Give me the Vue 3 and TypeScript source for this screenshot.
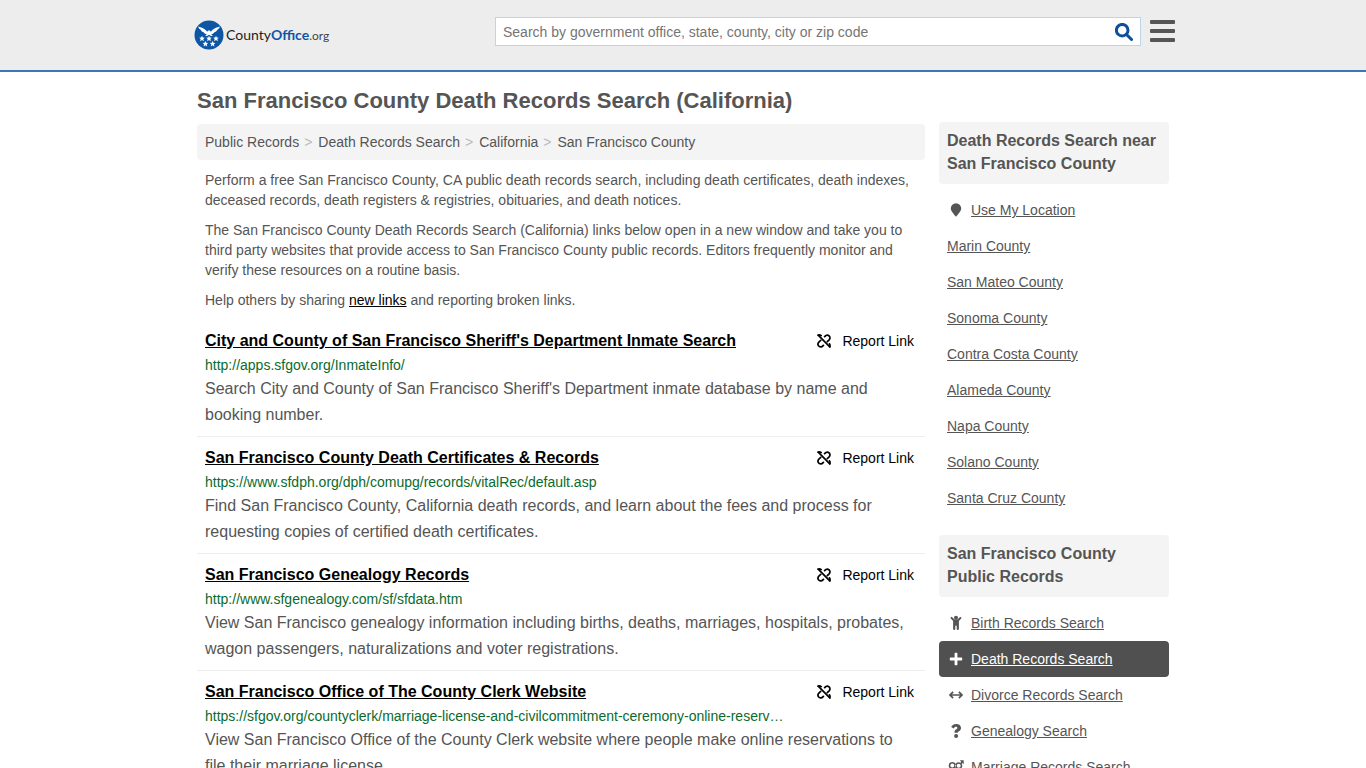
<script setup lang="ts">
interface Resource {
  title: string
  url: string
  text: string
}

interface RecordLink {
  label: string
  path: string
  active?: boolean
}

const crumbs: string[] = ['Public Records', 'Death Records Search', 'California', 'San Francisco County']

const stars: [number, number][] = [
  [8, 18.5],
  [15, 18.5],
  [22, 18.5],
  [11.4, 23.7],
  [18.6, 23.7],
]

const resources: Resource[] = [
  {
    title: "City and County of San Francisco Sheriff's Department Inmate Search",
    url: 'http://apps.sfgov.org/InmateInfo/',
    text: "Search City and County of San Francisco Sheriff's Department inmate database by name and booking number.",
  },
  {
    title: 'San Francisco County Death Certificates & Records',
    url: 'https://www.sfdph.org/dph/comupg/records/vitalRec/default.asp',
    text: 'Find San Francisco County, California death records, and learn about the fees and process for requesting copies of certified death certificates.',
  },
  {
    title: 'San Francisco Genealogy Records',
    url: 'http://www.sfgenealogy.com/sf/sfdata.htm',
    text: 'View San Francisco genealogy information including births, deaths, marriages, hospitals, probates, wagon passengers, naturalizations and voter registrations.',
  },
  {
    title: 'San Francisco Office of The County Clerk Website',
    url: 'https://sfgov.org/countyclerk/marriage-license-and-civilcommitment-ceremony-online-reservations',
    text: 'View San Francisco Office of the County Clerk website where people make online reservations to file their marriage license.',
  },
]

const counties: string[] = [
  'Marin County',
  'San Mateo County',
  'Sonoma County',
  'Contra Costa County',
  'Alameda County',
  'Napa County',
  'Solano County',
  'Santa Cruz County',
]

const records: RecordLink[] = [
  {
    label: 'Birth Records Search',
    path: 'M8 .8a2 2 0 1 1 0 4 2 2 0 0 1 0-4zM2.800 2.200a1 1 0 0 1 1.400 0L6.800 4.800h2.400l2.600-2.600a1 1 0 0 1 1.400 1.400L10.900 6v8a1.100 1.100 0 0 1-2.200 0v-3.300H7.300V14a1.100 1.100 0 0 1-2.200 0V6L2.800 3.600a1 1 0 0 1 0-1.400z',
  },
  {
    label: 'Death Records Search',
    path: 'M7.200 1.800h1.600q.6 0 .6.600v4.200h4.200q.6 0 .6.600v1.600q0 .6-.6.600H9.400v4.200q0 .6-.6.600H7.200q-.6 0-.6-.6V9.400H2.400q-.6 0-.6-.6V7.200q0-.6.6-.6h4.200V2.400q0-.6.6-.6z',
    active: true,
  },
  {
    label: 'Divorce Records Search',
    path: 'M.8 8l3.700-3.700 1.200 1.200L4 7.200h8l-1.700-1.700 1.200-1.200L15.200 8l-3.700 3.700-1.200-1.200L12 8.800H4l1.700 1.700-1.200 1.200z',
  },
  {
    label: 'Genealogy Search',
    path: 'M3.200 4C4.200 2 5.900.9 8.200.9c2.700 0 4.800 1.600 4.800 4 0 3.100-3.200 3.200-3.200 4.500v.3H6.500v-.6c0-2.500 2.900-2.700 2.900-4 0-.8-.6-1.300-1.500-1.300-.9 0-1.600.6-2.200 1.600zM8.100 10.900a2 2 0 1 1 0 4 2 2 0 0 1 0-4z',
  },
  {
    label: 'Marriage Records Search',
    path: 'M4.300 3a3.600 3.600 0 0 1 .8 7.100v1.400h1.500V13H5.100v1.800H3.500V13H2v-1.500h1.500v-1.400A3.600 3.600 0 0 1 4.300 3zm0 1.600a2 2 0 1 0 0 4 2 2 0 0 0 0-4zM11.800 1.300h3.900v3.900l-1.200-1.100-.8.800a3.600 3.600 0 1 1-1.100-1.100l.7-.8zM10.700 4.800a2 2 0 1 0 0 4 2 2 0 0 0 0-4z',
  },
]
</script>

<template>
  <div class="page">
    <header class="site-header">
      <div class="wrap header-row">
        <a class="logo" href="#" aria-label="CountyOffice.org">
          <svg class="emblem" viewBox="0 0 30 30" aria-hidden="true">
            <circle cx="15" cy="15" r="14.500" fill="#0d56a6" />
            <path
              fill="#fff"
              d="M4 6.500c3.500.8 7 2 9.300 5.300.3-.9.900-1.400 1.800-1.400.8 0 1.400.4 1.700 1.300C19 8.500 22.500 7.300 26 6.500c-.6 1.600-1.500 2.700-2.700 3.300-.7 1.400-1.700 2.200-2.900 2.500-.8 1.200-1.900 1.900-3.200 2.100l1.800 1.600h-2L15 14.800 13 16h-2l1.800-1.600c-1.300-.2-2.400-.9-3.200-2.100-1.200-.3-2.200-1.100-2.900-2.500C5.500 9.200 4.600 8.100 4 6.500z"
            />
            <path
              v-for="[x, y] in stars"
              :key="`${x}-${y}`"
              :transform="`translate(${x} ${y})`"
              fill="#fff"
              d="M0-2.800.8-.9l2 .1L1.300.6l.6 2.100L0 1.600l-1.900 1.100.6-2.100L-2.800-.8l2-.1z"
            />
          </svg>
          <span class="wordmark">County<b>Office</b><i>.org</i></span>
        </a>
        <form class="search" role="search" @submit.prevent>
          <input
            type="text"
            aria-label="Search by government office, state, county, city or zip code"
            placeholder="Search by government office, state, county, city or zip code"
          />
          <button type="submit" aria-label="Search">
            <svg viewBox="0 0 18 18" aria-hidden="true">
              <circle cx="7.200" cy="7.200" r="5.800" />
              <path d="M11.500 11.500l5 5" />
            </svg>
          </button>
        </form>
        <button class="menu" type="button" aria-label="Menu"><span /><span /><span /></button>
      </div>
    </header>

    <div class="wrap columns">
      <main>
        <h1>San Francisco County Death Records Search (California)</h1>
        <nav class="crumbs" aria-label="Breadcrumb">
          <template v-for="(crumb, i) in crumbs" :key="crumb">
            <span v-if="i > 0" class="sep">&gt;</span>
            <a href="#">{{ crumb }}</a>
          </template>
        </nav>
        <div class="intro">
          <p>
            Perform a free San Francisco County, CA public death records search, including death certificates, death
            indexes, deceased records, death registers &amp; registries, obituaries, and death notices.
          </p>
          <p>
            The San Francisco County Death Records Search (California) links below open in a new window and take you to
            third party websites that provide access to San Francisco County public records. Editors frequently monitor
            and verify these resources on a routine basis.
          </p>
          <p>Help others by sharing <a href="#">new links</a> and reporting broken links.</p>
        </div>
        <article v-for="item in resources" :key="item.url" class="resource">
          <div class="resource-head">
            <h2><a href="#">{{ item.title }}</a></h2>
            <button type="button" class="report">
              <svg viewBox="0 0 14 14" aria-hidden="true">
                <path d="M1.200 1.200l11.600 11.600" />
                <path d="M7.600 2.600c1.400-1.600 3.200-1.900 4.500-.8 1.300 1.300 1.100 3-.2 4.300L10.300 7.600M6.400 11.400c-1.400 1.600-3.200 1.900-4.500.8-1.300-1.300-1.100-3 .2-4.300L3.700 6.400" />
                <path d="M1.200 1.200q1.600-.6 3 .4M12.800 12.800q.6-1.800-.4-3" />
              </svg>
              Report Link
            </button>
          </div>
          <div class="url">{{ item.url }}</div>
          <p>{{ item.text }}</p>
        </article>
      </main>

      <aside>
        <section>
          <h3>Death Records Search near San Francisco County</h3>
          <ul>
            <li>
              <a href="#">
                <svg viewBox="0 0 16 16" aria-hidden="true">
                  <path d="M8 1.200a5.200 5.200 0 0 1 5.200 5.200c0 2.800-2.900 5.200-5.200 8.400-2.300-3.200-5.200-5.600-5.200-8.400A5.200 5.200 0 0 1 8 1.200z" />
                </svg>
                <span>Use My Location</span>
              </a>
            </li>
            <li v-for="county in counties" :key="county">
              <a href="#"><span>{{ county }}</span></a>
            </li>
          </ul>
        </section>
        <section>
          <h3>San Francisco County Public Records</h3>
          <ul>
            <li v-for="record in records" :key="record.label">
              <a href="#" :class="{ active: record.active }">
                <svg viewBox="0 0 16 16" aria-hidden="true"><path fill-rule="evenodd" :d="record.path" /></svg>
                <span>{{ record.label }}</span>
              </a>
            </li>
          </ul>
        </section>
      </aside>
    </div>
  </div>
</template>

<style>
body {
  margin: 0;
  background: #fff;
}
</style>

<style scoped>
.page {
  font-family: "Liberation Sans", Arial, sans-serif;
  font-size: 14px;
  line-height: 20px;
  color: #555;
}
.page * {
  box-sizing: border-box;
}
a {
  color: inherit;
}
button {
  padding: 0;
  border: 0;
  background: none;
  font: inherit;
  color: inherit;
  cursor: pointer;
}
.wrap {
  max-width: 988px;
  margin: 0 auto;
}
.site-header {
  background: #ededed;
  border-bottom: 2px solid #3a78b5;
}
.header-row {
  display: flex;
  align-items: flex-start;
  height: 70px;
  padding: 17px 2px 0 5px;
}
.logo {
  display: flex;
  align-items: center;
  gap: 2px;
  margin-top: 3px;
  color: #222;
  text-decoration: none;
}
.emblem {
  width: 30px;
  height: 30px;
}
.wordmark {
  font-family: Lato, "Open Sans", sans-serif;
  font-size: 14px;
}
.wordmark b {
  color: #0d56a6;
}
.wordmark i {
  font-size: 12px;
  font-style: normal;
  color: #444;
}
.search {
  display: flex;
  width: 646px;
  height: 29px;
  margin-left: auto;
  background: #fff;
  border: 1px solid #bdd5e8;
}
.search input {
  flex: 1;
  min-width: 0;
  padding: 0 7px;
  border: 0;
  outline: 0;
  background: none;
  font: inherit;
  color: #555;
}
.search input::placeholder {
  color: #757575;
  opacity: 1;
}
.search button {
  width: 32px;
}
.search svg {
  display: block;
  width: 18px;
  height: 18px;
  margin-left: 7px;
  fill: none;
  stroke: #0d4f9c;
  stroke-width: 3;
  stroke-linecap: round;
}
.menu {
  display: flex;
  flex-direction: column;
  gap: 5px;
  width: 25px;
  margin: 3px 0 0 9px;
}
.menu span {
  width: 100%;
  height: 4px;
  border-radius: 1px;
  background: #555;
}
.columns {
  display: flex;
  gap: 14px;
  padding: 0 8px;
}
main {
  flex: 1;
  min-width: 0;
}
h1 {
  margin: 15px 0 9px;
  font-size: 22px;
  line-height: 28px;
}
.crumbs {
  display: flex;
  padding: 8px;
  border-radius: 4px;
  background: #f4f4f4;
}
.crumbs a {
  text-decoration: none;
}
.sep {
  margin: 0 6px 0 5px;
  color: #bbb;
}
.intro {
  padding: 10px 8px 0;
}
.intro p {
  margin: 0 0 10px;
}
.intro a {
  color: #000;
}
.resource {
  padding: 9px 8px 8px;
  border-bottom: 1px solid #eee;
}
.resource-head {
  display: flex;
  justify-content: space-between;
  align-items: flex-start;
  margin-bottom: 2px;
}
h2 {
  margin: 0;
  font-size: 16px;
  line-height: 24px;
  color: #000;
}
.report {
  display: flex;
  align-items: center;
  gap: 11px;
  height: 24px;
  margin-right: 3px;
  color: #000;
}
.report svg {
  width: 14px;
  height: 14px;
  fill: none;
  stroke: #000;
  stroke-width: 1.700;
  stroke-linecap: round;
}
.url {
  max-width: 583px;
  overflow: hidden;
  white-space: nowrap;
  text-overflow: ellipsis;
  color: #0a6b2d;
}
.resource p {
  margin: 1px 0 0;
  font-size: 16px;
  line-height: 26px;
}
aside {
  width: 230px;
  padding-top: 50px;
}
h3 {
  margin: 0 0 8px;
  padding: 7px 8px 9px;
  border-radius: 4px;
  background: #f4f4f4;
  font-size: 16px;
  line-height: 23px;
}
ul {
  margin: 0 0 19px;
  padding: 0;
  list-style: none;
}
li a {
  display: flex;
  align-items: center;
  gap: 7px;
  height: 36px;
  padding: 0 8px;
  border-radius: 4px;
  text-decoration: none;
}
li a span {
  text-decoration: underline;
}
li svg {
  width: 16px;
  height: 16px;
  margin-left: 1px;
  fill: currentColor;
}
li a.active {
  background: #505050;
  color: #fff;
}
</style>
